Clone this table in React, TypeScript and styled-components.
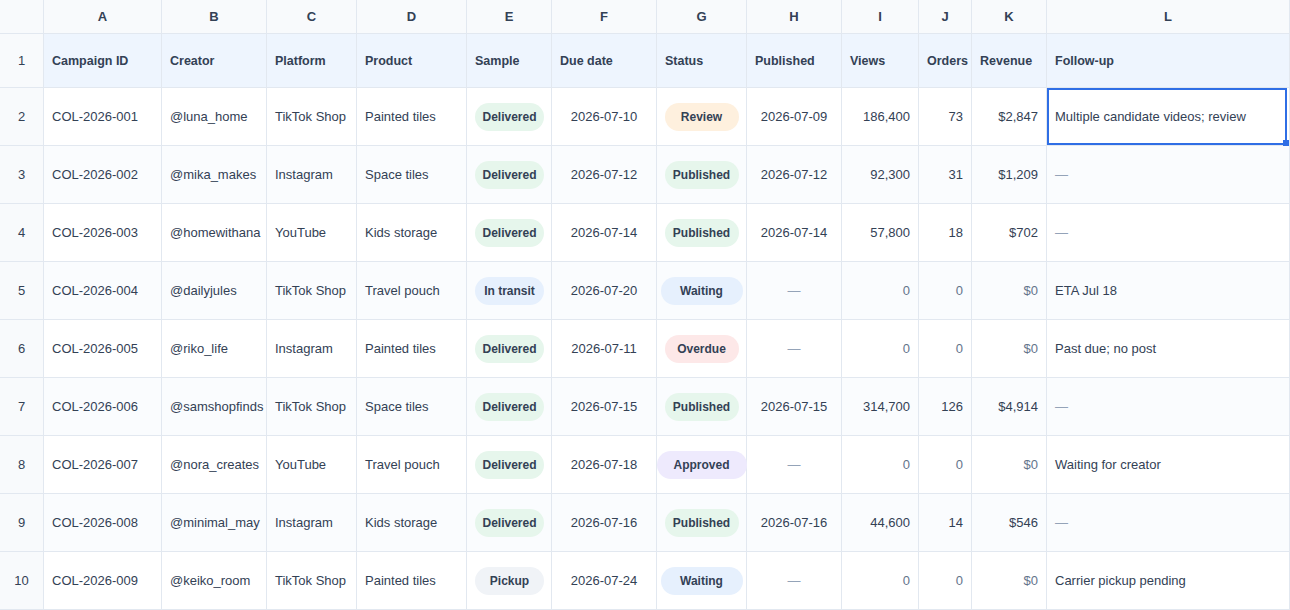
import React from "react";
import styled, { createGlobalStyle, css } from "styled-components";

const GlobalStyle = createGlobalStyle`
  html, body { margin: 0; padding: 0; background: #ffffff; }
  body { font-family: "Liberation Sans", Arial, sans-serif; color: #334155; }
  * { box-sizing: border-box; }
`;

const COLS = [44, 118, 105, 90, 110, 85, 105, 90, 95, 77, 53, 75, 243];
const LETTERS = ["A", "B", "C", "D", "E", "F", "G", "H", "I", "J", "K", "L"];
const HEADERS = [
  "Campaign ID", "Creator", "Platform", "Product", "Sample", "Due date",
  "Status", "Published", "Views", "Orders", "Revenue", "Follow-up",
];

type Align = "left" | "center" | "right";
const ALIGNS: Align[] = [
  "left", "left", "left", "left", "left", "center",
  "center", "center", "right", "right", "right", "left",
];

type Row = {
  id: string; creator: string; platform: string; product: string;
  sample: string; due: string; status: string; published: string;
  views: string; orders: string; revenue: string; follow: string;
};

const ROWS: Row[] = [
  { id: "COL-2026-001", creator: "@luna_home", platform: "TikTok Shop", product: "Painted tiles", sample: "Delivered", due: "2026-07-10", status: "Review", published: "2026-07-09", views: "186,400", orders: "73", revenue: "$2,847", follow: "Multiple candidate videos; review" },
  { id: "COL-2026-002", creator: "@mika_makes", platform: "Instagram", product: "Space tiles", sample: "Delivered", due: "2026-07-12", status: "Published", published: "2026-07-12", views: "92,300", orders: "31", revenue: "$1,209", follow: "—" },
  { id: "COL-2026-003", creator: "@homewithana", platform: "YouTube", product: "Kids storage", sample: "Delivered", due: "2026-07-14", status: "Published", published: "2026-07-14", views: "57,800", orders: "18", revenue: "$702", follow: "—" },
  { id: "COL-2026-004", creator: "@dailyjules", platform: "TikTok Shop", product: "Travel pouch", sample: "In transit", due: "2026-07-20", status: "Waiting", published: "—", views: "0", orders: "0", revenue: "$0", follow: "ETA Jul 18" },
  { id: "COL-2026-005", creator: "@riko_life", platform: "Instagram", product: "Painted tiles", sample: "Delivered", due: "2026-07-11", status: "Overdue", published: "—", views: "0", orders: "0", revenue: "$0", follow: "Past due; no post" },
  { id: "COL-2026-006", creator: "@samshopfinds", platform: "TikTok Shop", product: "Space tiles", sample: "Delivered", due: "2026-07-15", status: "Published", published: "2026-07-15", views: "314,700", orders: "126", revenue: "$4,914", follow: "—" },
  { id: "COL-2026-007", creator: "@nora_creates", platform: "YouTube", product: "Travel pouch", sample: "Delivered", due: "2026-07-18", status: "Approved", published: "—", views: "0", orders: "0", revenue: "$0", follow: "Waiting for creator" },
  { id: "COL-2026-008", creator: "@minimal_may", platform: "Instagram", product: "Kids storage", sample: "Delivered", due: "2026-07-16", status: "Published", published: "2026-07-16", views: "44,600", orders: "14", revenue: "$546", follow: "—" },
  { id: "COL-2026-009", creator: "@keiko_room", platform: "TikTok Shop", product: "Painted tiles", sample: "Pickup", due: "2026-07-24", status: "Waiting", published: "—", views: "0", orders: "0", revenue: "$0", follow: "Carrier pickup pending" },
];

const BADGE_BG: Record<string, string> = {
  Delivered: "#e6f6ec",
  Published: "#e6f6ec",
  Review: "#fef0de",
  Waiting: "#e6f0fd",
  "In transit": "#e6f0fd",
  Overdue: "#fde8e8",
  Approved: "#eeeafd",
  Pickup: "#f0f3f7",
};

const STATUS_W: Record<string, number> = {
  Review: 74, Published: 74, Overdue: 74, Waiting: 82, Approved: 90,
};

const Sheet = styled.div`
  display: grid;
  grid-template-columns: ${COLS.map((w) => `${w}px`).join(" ")};
  grid-template-rows: 34px 54px repeat(9, 58px);
  width: 1290px;
  font-size: 13px;
`;

const BaseCell = css`
  display: flex;
  align-items: center;
  border-right: 1px solid #e2e8f0;
  border-bottom: 1px solid #e2e8f0;
  white-space: nowrap;
  overflow: visible;
  min-width: 0;
`;

const Corner = styled.div`
  ${BaseCell};
  background: #f8fafc;
`;

const ColLetter = styled.div`
  ${BaseCell};
  justify-content: center;
  background: #f8fafc;
  font-weight: 700;
  font-size: 13px;
  color: #334155;
`;

const RowNum = styled.div`
  ${BaseCell};
  justify-content: center;
  background: #f8fafc;
  font-size: 13px;
  color: #334155;
`;

const HeadCell = styled.div`
  ${BaseCell};
  padding: 0 8px;
  background: #eef5fe;
  font-weight: 700;
  font-size: 12.5px;
  color: #334155;
`;

const justify = { left: "flex-start", center: "center", right: "flex-end" };

const Cell = styled.div<{ $align: Align; $tint: boolean; $muted?: boolean; $faint?: boolean }>`
  ${BaseCell};
  position: relative;
  padding: 0 8px;
  justify-content: ${(p) => justify[p.$align]};
  background: ${(p) => (p.$tint ? "#fafcfe" : "#ffffff")};
  color: ${(p) => (p.$faint ? "#94a3b8" : p.$muted ? "#64748b" : "#334155")};
`;

const Badge = styled.span<{ $bg: string; $w: number }>`
  display: inline-flex;
  align-items: center;
  justify-content: center;
  flex: none;
  width: ${(p) => p.$w}px;
  height: 28px;
  border-radius: 14px;
  background: ${(p) => p.$bg};
  color: #334155;
  font-weight: 700;
  font-size: 12px;
`;

const Selection = styled.div`
  position: absolute;
  top: 0;
  left: 0;
  right: 2px;
  bottom: 0;
  border: 2px solid #2f6ee5;
  pointer-events: none;
`;

const Handle = styled.div`
  position: absolute;
  right: -4px;
  bottom: -3px;
  width: 6px;
  height: 6px;
  background: #2f6ee5;
`;

function renderValue(col: number, value: string) {
  if (col === 4) return <Badge $bg={BADGE_BG[value]} $w={69}>{value}</Badge>;
  if (col === 6) return <Badge $bg={BADGE_BG[value]} $w={STATUS_W[value]}>{value}</Badge>;
  return value;
}

export default function App() {
  return (
    <>
      <GlobalStyle />
      <Sheet>
        <Corner />
        {LETTERS.map((l) => (
          <ColLetter key={l}>{l}</ColLetter>
        ))}
        <RowNum>1</RowNum>
        {HEADERS.map((h) => (
          <HeadCell key={h}>{h}</HeadCell>
        ))}
        {ROWS.map((r, i) => {
          const values = [
            r.id, r.creator, r.platform, r.product, r.sample, r.due,
            r.status, r.published, r.views, r.orders, r.revenue, r.follow,
          ];
          const tint = i % 2 === 1;
          return (
            <React.Fragment key={r.id}>
              <RowNum>{i + 2}</RowNum>
              {values.map((v, c) => {
                const isDash = v === "—";
                const isZero = c >= 8 && c <= 10 && (v === "0" || v === "$0");
                const selected = i === 0 && c === 11;
                return (
                  <Cell
                    key={c}
                    $align={ALIGNS[c]}
                    $tint={tint}
                    $muted={isZero}
                    $faint={isDash}
                  >
                    {renderValue(c, v)}
                    {selected && (
                      <Selection>
                        <Handle />
                      </Selection>
                    )}
                  </Cell>
                );
              })}
            </React.Fragment>
          );
        })}
      </Sheet>
    </>
  );
}
